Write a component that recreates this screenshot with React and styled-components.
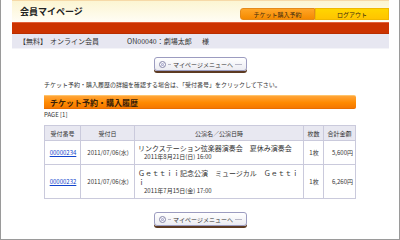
import React from 'react';
import styled, { createGlobalStyle } from 'styled-components';

const GlobalStyle = createGlobalStyle`
  html, body {
    margin: 0;
    padding: 0;
    background: #fff;
  }
  body {
    font-family: "Noto Sans CJK JP", "Noto Sans", sans-serif;
    color: #333;
  }
`;

const orders = [
  {
    no: '00000234',
    date: '2011/07/06(水)',
    title: ['リンクステーション弦楽器演奏会　夏休み演奏会'],
    when: '2011年8月21日(日) 16:00',
    qty: '1枚',
    total: '5,600円',
    height: 24,
  },
  {
    no: '00000232',
    date: '2011/07/06(水)',
    title: ['Ｇｅｔｔｉｉ記念公演　ミュージカル　Ｇｅｔｔｉ', 'ｉ'],
    when: '2011年7月15日(金) 17:00',
    qty: '1枚',
    total: '6,260円',
    height: 34,
  },
];

function App() {
  return (
    <>
      <GlobalStyle />
      <Frame>
        <Header>
          <Title>会員マイページ</Title>
          <Tabs>
            <Tab first>チケット購入予約</Tab>
            <Tab>ログアウト</Tab>
          </Tabs>
        </Header>
        <RedBar />
        <InfoBar>
          <span>【無料】</span>
          <Member>オンライン会員</Member>
          <Name>ON00040：劇場太郎</Name>
          <span>様</span>
        </InfoBar>

        <ButtonRow>
          <MenuButton>
            <Ring />
            <Dash short />
            <span>マイページメニューへ</span>
            <Dash />
          </MenuButton>
        </ButtonRow>

        <Main>
          <Note>チケット予約・購入履歴の詳細を確認する場合は、「受付番号」をクリックして下さい。</Note>
          <SectionBar>チケット予約・購入履歴</SectionBar>
          <Page>PAGE [1]</Page>
          <Table>
            <colgroup>
              <col style={{ width: 36 }} />
              <col style={{ width: 54 }} />
              <col style={{ width: 169 }} />
              <col style={{ width: 20 }} />
              <col style={{ width: 32 }} />
            </colgroup>
            <thead>
              <tr>
                <Th>受付番号</Th>
                <Th>受付日</Th>
                <Th>公演名／公演日時</Th>
                <Th>枚数</Th>
                <Th>合計金額</Th>
              </tr>
            </thead>
            <tbody>
              {orders.map((o) => (
                <tr key={o.no} style={{ height: o.height }}>
                  <Td align="center"><OrderLink href="#">{o.no}</OrderLink></Td>
                  <Td align="center">{o.date}</Td>
                  <Td>
                    {o.title.map((t) => (
                      <ShowTitle key={t}>{t}</ShowTitle>
                    ))}
                    <ShowDate>{o.when}</ShowDate>
                  </Td>
                  <Td align="center">{o.qty}</Td>
                  <Td align="right">{o.total}</Td>
                </tr>
              ))}
            </tbody>
          </Table>
        </Main>

        <ButtonRow bottom>
          <MenuButton>
            <Ring />
            <Dash short />
            <span>マイページメニューへ</span>
            <Dash />
          </MenuButton>
        </ButtonRow>
      </Frame>
    </>
  );
}

export default App;

const Frame = styled.div`
  width: 400px;
  height: 240px;
  box-sizing: border-box;
  border-left: 1px solid #9a9a9a;
  border-right: 1px solid #9a9a9a;
  border-bottom: 1px solid #9a9a9a;
  padding: 0 10px 0 11px;
  overflow: hidden;
`;

const Header = styled.div`
  height: 22px;
  box-sizing: border-box;
  border-top: 1px solid #f6d9a8;
  background: linear-gradient(#fcf5d2, #fffdf5);
  display: flex;
  align-items: center;
  justify-content: space-between;
`;

const Title = styled.div`
  padding-left: 8px;
  font-size: 9px;
  font-weight: bold;
  color: #222;
  line-height: 1;
`;

const Tabs = styled.div`
  display: flex;
  height: 12px;
  margin-top: 5px;
`;

const Tab = styled.div`
  width: ${(p) => (p.first ? '75px' : '74px')};
  box-sizing: border-box;
  display: flex;
  align-items: center;
  justify-content: center;
  font-size: 6px;
  color: #3a2a10;
  background: ${(p) => (p.first ? 'linear-gradient(#ffa526, #f58a00)' : 'linear-gradient(#ffd500, #ffc400)')};
  border: 1px solid ${(p) => (p.first ? '#e48a1a' : '#f0b800')};
  border-radius: ${(p) => (p.first ? '3px 0 0 3px' : '0')};
`;

const RedBar = styled.div`
  height: 12px;
  box-sizing: border-box;
  background: #cc3300;
  border-top: 1px solid #e2603a;
  border-bottom: 1px solid #b82e00;
`;

const InfoBar = styled.div`
  height: 15px;
  box-sizing: border-box;
  background: #e7e7f1;
  border-bottom: 1px solid #f4f4f8;
  display: flex;
  align-items: center;
  padding-left: 7px;
  font-size: 7px;
  color: #333;
`;

const Member = styled.span`
  margin-left: 3px;
  width: 77px;
`;

const Name = styled.span`
  width: 75px;
`;

const ButtonRow = styled.div`
  display: flex;
  justify-content: center;
  margin-top: ${(p) => (p.bottom ? '13px' : '8px')};
`;

const MenuButton = styled.div`
  width: 93px;
  height: 14px;
  box-sizing: border-box;
  border: 1px solid #9c9cc0;
  border-radius: 3px;
  background: linear-gradient(#ffffff, #ececf2);
  box-shadow: 0 2px 0 #5c3a22;
  display: flex;
  align-items: center;
  padding: 0 4px;
  gap: 2px;
  font-size: 6px;
  color: #333;
  white-space: nowrap;
`;

const Ring = styled.span`
  width: 5px;
  height: 5px;
  border-radius: 50%;
  border: 1px solid #8888aa;
  box-shadow: inset 0 0 0 1px #fff, inset 0 0 0 2px #aaaacc;
  flex: none;
`;

const Dash = styled.span`
  height: 1px;
  background: #b8b8c8;
  flex: ${(p) => (p.short ? '0 0 3px' : '1')};
`;

const Main = styled.div`
  padding: 0 33px 0 32px;
`;

const Note = styled.div`
  margin-top: 10px;
  font-size: 6px;
  line-height: 8px;
  color: #333;
  white-space: nowrap;
`;

const SectionBar = styled.div`
  margin-top: 6px;
  height: 14px;
  box-sizing: border-box;
  border-top: 1px solid #ffc46a;
  border-bottom: 1px solid #e86e00;
  background: linear-gradient(#ffa53a, #ff8a00 55%, #f47800);
  border-radius: 0 2px 2px 0;
  padding-left: 6px;
  display: flex;
  align-items: center;
  font-size: 8px;
  font-weight: bold;
  color: #3a2008;
`;

const Page = styled.div`
  margin-top: 2px;
  font-size: 6px;
  line-height: 8px;
  color: #333;
`;

const Table = styled.table`
  margin-top: 6px;
  width: 311px;
  border-collapse: collapse;
  table-layout: fixed;
  font-size: 6px;
  color: #333;
`;

const Th = styled.th`
  height: 14px;
  padding: 0;
  background: #e8e8f1;
  border: 1px solid #cacadc;
  font-weight: normal;
  text-align: center;
`;

const Td = styled.td`
  padding: 0 2px 0 3px;
  border: 1px solid #cacadc;
  text-align: ${(p) => p.align || 'left'};
  vertical-align: middle;
  white-space: nowrap;
`;

const OrderLink = styled.a`
  color: #1144cc;
  text-decoration: underline;
`;

const ShowTitle = styled.div`
  font-size: 7px;
  line-height: 9px;
  letter-spacing: 0;
`;

const ShowDate = styled.div`
  padding-left: 6px;
  font-size: 6px;
  line-height: 8px;
`;
